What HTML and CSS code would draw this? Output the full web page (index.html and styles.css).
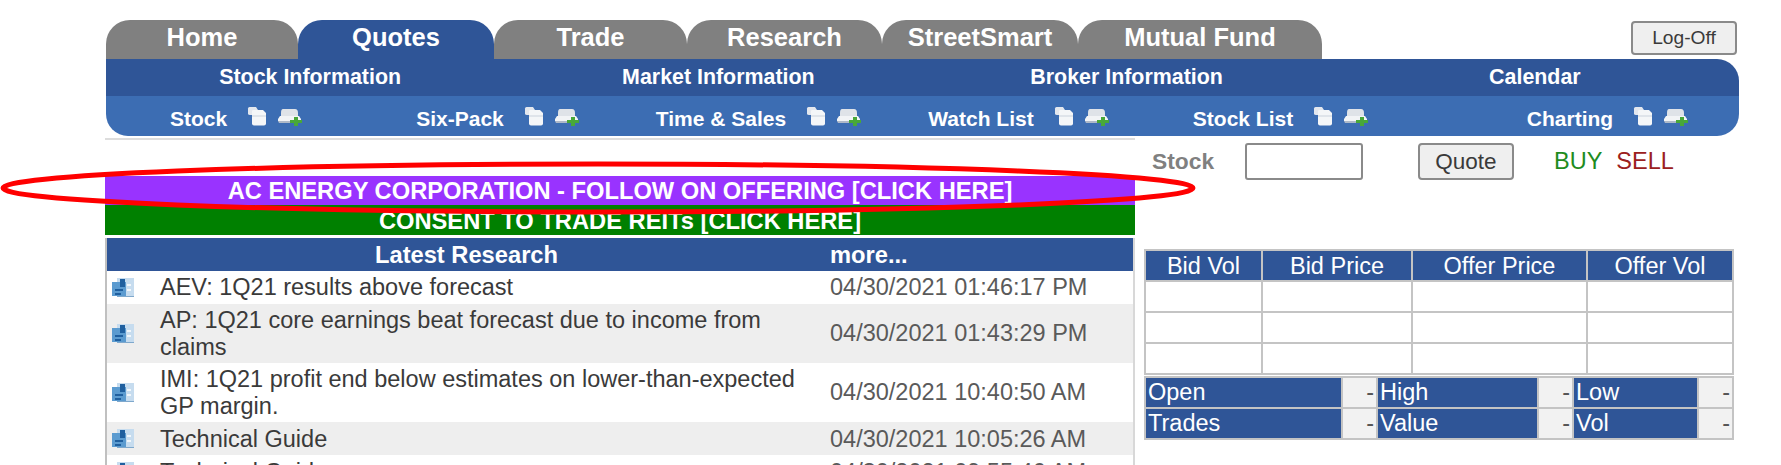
FILE: index.html
```html
<!DOCTYPE html>
<html lang="en">
<head>
  <meta charset="utf-8" />
  <title>Quotes</title>
  <link rel="stylesheet" href="styles.css">
</head>
<body>
  <svg width="0" height="0" class="defs">
    <symbol id="pages" viewBox="0 0 20 20">
      <path d="M1 2.5 Q1 1 2.5 1 H9 L11 4 V9 H3 Q1 9 1 7.5 Z" fill="#e3e7ee"/>
      <path d="M5 5 Q5 4 6.5 4 H16 L19 7 V17.5 Q19 19.5 17 19.5 H7 Q5 19.5 5 17.5 Z" fill="#f4f6f8"/>
      <path d="M5 9 H19 V11 H5 Z" fill="#dfe4ea"/>
    </symbol>
    <symbol id="tray" viewBox="0 0 26 18">
      <path d="M6 1 H18 Q21 1 21 5 V9 H4 V5 Q4 1 6 1 Z" fill="#dfe3e8"/>
      <path d="M3 8 H22 L24 11 V13 H1 V11 Z" fill="#f2f4f6"/>
      <path d="M1 13 H18 V15 H2 Z" fill="#aeb9c8"/>
      <path d="M17 9 H21 V12 H25 V15 H21 V18 H17 V15 H13 V12 H17 Z" fill="#48a838"/>
    </symbol>
    <symbol id="report" viewBox="0 0 23 19">
      <path d="M5 0 H22 V19 H5 Z" fill="#c6dcef"/>
      <path d="M0 4 H14 V18 H0 Z" fill="#5b9bd0"/>
      <path d="M8 1 H13 V9 H8 Z M3 11 H11 V13 H3 Z M3 15 H9 V17 H3 Z" fill="#1f5f9f"/>
      <path d="M15 6 H19 V8 H15 Z M15 11 H19 V13 H15 Z" fill="#f2f7fb"/>
      <path d="M5 18 H22 V19 H5 Z" fill="#7fa8cc"/>
    </symbol>
  </svg>

  <div class="top">
    <nav class="tabs">
      <a class="tab">Home</a>
      <a class="tab on">Quotes</a>
      <a class="tab">Trade</a>
      <a class="tab">Research</a>
      <a class="tab">StreetSmart</a>
      <a class="tab">Mutual Fund</a>
    </nav>
    <button class="btn logoff">Log-Off</button>
  </div>

  <div class="subnav">
    <div class="row1">
      <a>Stock Information</a>
      <a>Market Information</a>
      <a>Broker Information</a>
      <a>Calendar</a>
    </div>
    <div class="row2">
      <div class="item"><a>Stock</a><svg class="i-pages"><use href="#pages"/></svg><svg class="i-tray"><use href="#tray"/></svg></div>
      <div class="item"><a>Six-Pack</a><svg class="i-pages"><use href="#pages"/></svg><svg class="i-tray"><use href="#tray"/></svg></div>
      <div class="item"><a>Time &amp; Sales</a><svg class="i-pages"><use href="#pages"/></svg><svg class="i-tray"><use href="#tray"/></svg></div>
      <div class="item"><a>Watch List</a><svg class="i-pages"><use href="#pages"/></svg><svg class="i-tray"><use href="#tray"/></svg></div>
      <div class="item"><a>Stock List</a><svg class="i-pages"><use href="#pages"/></svg><svg class="i-tray"><use href="#tray"/></svg></div>
      <div class="item last"><a>Charting</a><svg class="i-pages"><use href="#pages"/></svg><svg class="i-tray"><use href="#tray"/></svg></div>
    </div>
  </div>

  <main class="content">
    <section class="left">
      <a class="banner purple">AC ENERGY CORPORATION - FOLLOW ON OFFERING [CLICK HERE]</a>
      <a class="banner green">CONSENT TO TRADE REITs [CLICK HERE]</a>
      <table class="research">
        <colgroup><col class="c-icon"><col class="c-title"><col></colgroup>
        <thead>
          <tr><th></th><th class="center">Latest Research</th><th>more...</th></tr>
        </thead>
        <tbody>
          <tr><td><svg class="i-report"><use href="#report"/></svg></td><td>AEV: 1Q21 results above forecast</td><td class="date">04/30/2021 01:46:17 PM</td></tr>
          <tr><td><svg class="i-report"><use href="#report"/></svg></td><td>AP: 1Q21 core earnings beat forecast due to income from claims</td><td class="date">04/30/2021 01:43:29 PM</td></tr>
          <tr><td><svg class="i-report"><use href="#report"/></svg></td><td>IMI: 1Q21 profit end below estimates on lower-than-expected GP margin.</td><td class="date">04/30/2021 10:40:50 AM</td></tr>
          <tr><td><svg class="i-report"><use href="#report"/></svg></td><td>Technical Guide</td><td class="date">04/30/2021 10:05:26 AM</td></tr>
          <tr><td><svg class="i-report"><use href="#report"/></svg></td><td>Technical Guide</td><td class="date">04/30/2021 09:55:46 AM</td></tr>
        </tbody>
      </table>
    </section>

    <section class="right">
      <div class="form">
        <label for="stock">Stock</label>
        <input id="stock" type="text" />
        <button class="btn quote">Quote</button>
        <a class="buy">BUY</a>
        <a class="sell">SELL</a>
      </div>

      <table class="book">
        <colgroup><col class="b1"><col class="b2"><col class="b3"><col class="b4"></colgroup>
        <thead><tr><th>Bid Vol</th><th>Bid Price</th><th>Offer Price</th><th>Offer Vol</th></tr></thead>
        <tbody>
          <tr><td></td><td></td><td></td><td></td></tr>
          <tr><td></td><td></td><td></td><td></td></tr>
          <tr><td></td><td></td><td></td><td></td></tr>
        </tbody>
      </table>

      <table class="stats">
        <colgroup><col class="s1"><col class="s2"><col class="s3"><col class="s4"><col class="s5"><col class="s6"></colgroup>
        <tr><th>Open</th><td>-</td><th>High</th><td>-</td><th>Low</th><td>-</td></tr>
        <tr><th>Trades</th><td>-</td><th>Value</th><td>-</td><th>Vol</th><td>-</td></tr>
      </table>
    </section>
  </main>

  <svg class="oval" width="1200" height="60" viewBox="0 0 1200 60">
    <ellipse cx="598" cy="30" rx="595" ry="24" fill="none" stroke="#ff0000" stroke-width="5"/>
  </svg>
</body>
</html>
```

FILE: styles.css
```css
html, body { height: 465px; overflow: hidden; }
body { margin: 0; background: #fff; color: #3a3a3a; font-family: "Liberation Sans", Arial, sans-serif; font-size: 23.5px; position: relative; }
a { color: inherit; text-decoration: none; }
.defs { position: absolute; }

.top { display: flex; justify-content: space-between; padding: 20px 44px 0 106px; height: 39px; }
.tabs { display: grid; grid-template-columns: 192px 196px 193px 195px 196px 244px; }
.tab { background: #808080; color: #fff; font-size: 25.5px; font-weight: bold; line-height: 35px; text-align: center; border-radius: 24px 24px 0 0; }
.tab.on { background: #2f5597; }

.btn { background: #efefef; border: 2px solid #8a8a8a; border-radius: 4px; color: #3a3a3a; font-family: inherit; padding: 0; }
.logoff { width: 106px; height: 34px; font-size: 19.2px; margin-top: 1px; }

.subnav { margin-left: 106px; margin-right: 42px; color: #fff; font-weight: bold; border-radius: 0 22px 22px 22px; overflow: hidden; }
.row1 { display: grid; grid-template-columns: repeat(4, 1fr); background: #2f5597; height: 37px; line-height: 36px; font-size: 21.4px; text-align: center; }
.row2 { display: grid; grid-template-columns: 261px 262px 260px 260px 264px 326px; background: #3c6db3; height: 40px; box-sizing: border-box; padding-top: 6px; font-size: 21px; }
.item { display: flex; justify-content: center; align-items: center; }
.item.last { padding-left: 64px; }
.i-pages { width: 20px; height: 20px; margin-left: 20px; margin-top: -6px; }
.i-tray { width: 26px; height: 18px; margin-left: 10px; margin-top: -4px; }

.content { display: grid; grid-template-columns: 1030px 1fr; margin-left: 105px; margin-top: 2px; }
.left { border-top: 2px solid #ddd; padding-top: 36px; }
.banner { display: block; color: #fff; font-weight: bold; font-size: 23.7px; text-align: center; }
.purple { background: #9933ff; height: 29px; line-height: 31px; }
.green { background: #008000; height: 30px; line-height: 32px; margin-bottom: 3px; }

.research { width: 1030px; border-collapse: collapse; table-layout: fixed; border-left: 2px solid #c0c0c0; border-right: 2px solid #d8d8d8; line-height: 26.6px; }
.c-icon { width: 54px; }
.c-title { width: 670px; }
.research th { background: #2f5597; color: #fff; font-size: 23.7px; height: 33px; padding: 1px 0 0; box-sizing: border-box; text-align: left; }
.research th.center { text-align: center; padding-right: 57px; }
.research td { height: 33px; padding: 3px 0; box-sizing: border-box; vertical-align: middle; }
.research tbody tr:nth-child(even) { background: #eee; }
.date { color: #5a5a5a; }
.i-report { display: block; width: 23px; height: 19px; margin-left: 5px; }

.right { padding-left: 17px; }
.form { display: flex; align-items: center; height: 37px; margin-top: 5px; }
.form label { width: 93px; color: #808080; font-weight: bold; font-size: 22.8px; }
.form input { width: 118px; height: 37px; box-sizing: border-box; border: 2px solid #8a8a8a; border-radius: 3px; background: #fff; padding: 0; }
.quote { width: 96px; height: 37px; font-size: 22.5px; margin-left: 55px; }
.buy { color: #1e8c1e; margin-left: 40px; }
.sell { color: #9b2020; margin-left: 14px; }

.book, .stats { border-collapse: collapse; table-layout: fixed; width: 588px; margin-left: -8px; }
.book { margin-top: 69px; }
.stats { margin-top: 1px; }
.book th, .book td, .stats th, .stats td { border: 2px solid #c4c4c4; height: 31px; padding: 0; box-sizing: border-box; }
.book th { background: #2f5597; color: #fff; font-weight: normal; text-align: center; padding-top: 2px; }
.b1 { width: 117px; }
.b2 { width: 150px; }
.b3 { width: 175px; }
.b4 { width: 146px; }
.stats th { background: #2f5597; color: #fff; font-weight: normal; text-align: left; padding-left: 2px; }
.stats td { background: #f2f2f2; color: #555; text-align: right; padding-right: 2px; }
.s1 { width: 197px; }
.s2 { width: 35px; }
.s3 { width: 161px; }
.s4 { width: 35px; }
.s5 { width: 125px; }
.s6 { width: 35px; }

/* annotation drawn over the page */
.oval { position: absolute; left: 0; top: 158px; pointer-events: none; }
```
